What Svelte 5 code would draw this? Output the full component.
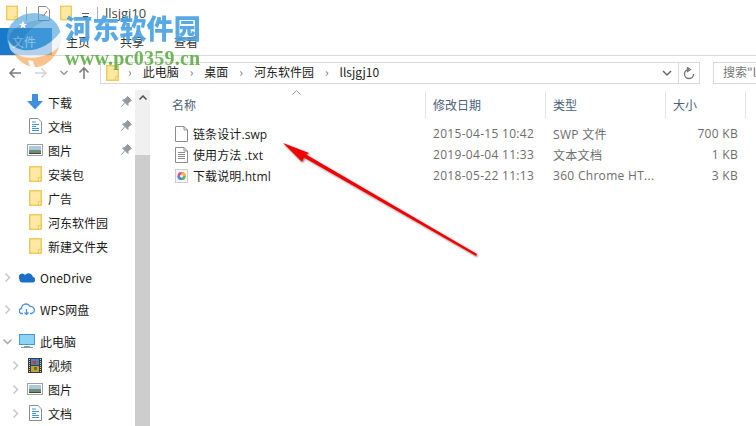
<script>
  const quick = [
    { name: '下载', icon: 'down', pin: true },
    { name: '文档', icon: 'doc', pin: true },
    { name: '图片', icon: 'pic', pin: true },
    { name: '安装包', icon: 'folder' },
    { name: '广告', icon: 'folder' },
    { name: '河东软件园', icon: 'folder' },
    { name: '新建文件夹', icon: 'folder' }
  ];
  const pc = [
    { name: '视频', icon: 'film' },
    { name: '图片', icon: 'pic' },
    { name: '文档', icon: 'doc' }
  ];
  const files = [
    { name: '链条设计.swp', date: '2015-04-15 10:42', type: 'SWP 文件', size: '700 KB', icon: 'blank' },
    { name: '使用方法 .txt', date: '2019-04-04 11:33', type: '文本文档', size: '1 KB', icon: 'txt' },
    { name: '下载说明.html', date: '2018-05-22 11:13', type: '360 Chrome HT...', size: '3 KB', icon: 'html' }
  ];
</script>

{#snippet folder(w, h)}
  <svg width={w} height={h} viewBox="0 0 13 16" class="ic">
    <rect x="0.75" y="0.75" width="11.5" height="14.5" fill="#fde9a4" stroke="#eecb5c" stroke-width="1.5" />
    <path d="M9.5 15V11.5H12.5" fill="none" stroke="#eecb5c" />
  </svg>
{/snippet}

{#snippet navIcon(kind)}
  {#if kind === 'down'}
    <svg width="16" height="16" viewBox="0 0 16 16" class="ic"><path d="M5 0H11V7H16L8 15.5L0 7H5Z" fill="#3f8fe0" /></svg>
  {:else if kind === 'doc'}
    <svg width="13" height="16" viewBox="0 0 13 16" class="ic">
      <path d="M.5.5H9L12.5 4V15.5H.5Z" fill="#fff" stroke="#8d8d8d" />
      <path d="M3 4H7M3 6.500H10M3 8.500H7M3 10.500H10M3 12.500H10" stroke="#3f9ad8" />
    </svg>
  {:else if kind === 'pic'}
    <svg width="16" height="12" viewBox="0 0 16 12" class="ic">
      <rect x=".5" y=".5" width="15" height="11" fill="#fff" stroke="#a0a0a0" />
      <rect x="2" y="2" width="12" height="4" fill="#a9c9dc" />
      <rect x="2" y="6" width="12" height="2.500" fill="#6f8f70" />
      <rect x="2" y="8.500" width="12" height="1.500" fill="#3d4a44" />
    </svg>
  {:else if kind === 'film'}
    <svg width="14" height="15" viewBox="0 0 14 15" class="ic">
      <rect width="14" height="15" fill="#3a3a3a" />
      <rect x="3" y="1" width="8" height="6" fill="#4a7fc0" />
      <rect x="3" y="8" width="8" height="6" fill="#c9a132" />
      <rect x="5" y="3" width="3" height="3" fill="#c33" />
      <rect x="6" y="9" width="3" height="3" fill="#3a8a3a" />
      <path d="M1.500 1V14M12.500 1V14" stroke="#ccc" stroke-dasharray="1 1" />
    </svg>
  {:else}
    {@render folder(13, 16)}
  {/if}
{/snippet}

{#snippet chevron(open)}
  <svg width="9" height="9" viewBox="0 0 9 9" class="chev">
    {#if open}<path d="M.5 2.500L4.500 6.500L8.500 2.500" fill="none" stroke="#a6a6a6" stroke-width="1.500" />
    {:else}<path d="M2.500 .5L6.500 4.500L2.500 8.500" fill="none" stroke="#c8c8c8" stroke-width="1.500" />{/if}
  </svg>
{/snippet}

<div class="win">
  <header class="title">
    {@render folder(12, 16)}
    <span class="sep one"></span>
    <svg width="12" height="15" viewBox="0 0 12 15" class="ic doc"><path d="M.5.5H8L11.500 4V14.500H.5Z" fill="#fff" stroke="#8a8a8a" /><path d="M3.500 8L5.500 10L9 5" fill="none" stroke="#e2573a" /></svg>
    {@render folder(12, 16)}
    <svg width="7" height="7" viewBox="0 0 7 7" class="drop"><path d="M0 .5H7M1 3.500H6L3.500 6.500Z" stroke="#333" stroke-width=".8" fill="#333" /></svg>
    <span class="sep two"></span>
    <span class="wintitle">llsjgj10</span>
  </header>

  <nav class="tabs">
    <div class="file">文件</div>
    <span>主页</span><span>共享</span><span>查看</span>
  </nav>

  <div class="addr">
    <svg width="14" height="12" viewBox="0 0 14 12" class="ar"><path d="M13 6H2M6.500 1.500L2 6L6.500 10.500" fill="none" stroke="#7d7d7d" stroke-width="1.600" /></svg>
    <svg width="14" height="12" viewBox="0 0 14 12" class="ar"><path d="M1 6H12M7.500 1.500L12 6L7.500 10.500" fill="none" stroke="#d4d4d4" stroke-width="1.600" /></svg>
    <svg width="8" height="6" viewBox="0 0 8 6" class="ar"><path d="M.5 1L4 4.500L7.500 1" fill="none" stroke="#8a8a8a" stroke-width="1.200" /></svg>
    <svg width="12" height="14" viewBox="0 0 12 14" class="ar up"><path d="M6 13V2M1.500 6.500L6 2L10.500 6.500" fill="none" stroke="#7d7d7d" stroke-width="1.600" /></svg>
    <div class="path">
      <span class="pf">{@render folder(13, 16)}</span>
      <i>›</i><span class="seg">此电脑</span><i>›</i><span class="seg">桌面</span><i>›</i><span class="seg">河东软件园</span><i>›</i><span class="seg">llsjgj10</span>
      <svg width="10" height="7" viewBox="0 0 10 7" class="pathdrop"><path d="M1 1L5 5L9 1" fill="none" stroke="#666" stroke-width="1.500" /></svg>
      <div class="refresh">
        <svg width="12" height="13" viewBox="0 0 12 13"><path d="M6 2.500A4.500 4.500 0 1 0 10.500 7M4.500 .5V4.500L7.500 2.500Z" fill="none" stroke="#777" stroke-width="1.300" /></svg>
      </div>
    </div>
    <div class="search">搜索"l</div>
  </div>

  <main class="body">
    <aside class="side">
      <div class="navlist">
        {#each quick as it}
          <div class="nav l2">
            <span class="icbox">{@render navIcon(it.icon)}</span>
            <span class="lbl">{it.name}</span>
            {#if it.pin}
              <svg width="11" height="11" viewBox="0 0 11 11" class="pin"><path d="M6.500 .5L10.500 4.500L9 5L7 7.500V9.500L1.500 4L3.500 3.500L6 1.500ZM3.500 7L.5 10.500" fill="#8f98a3" stroke="#8f98a3" /></svg>
            {/if}
          </div>
        {/each}
        <div class="nav l1 g1">
          {@render chevron(false)}
          <svg width="16" height="11" viewBox="0 0 16 11" class="ic"><path d="M3.500 10.500H13A2.800 2.800 0 0 0 14 5A4.500 4.500 0 0 0 6 3A3.500 3.500 0 0 0 .5 7.500A3 3 0 0 0 3.500 10.500Z" fill="#1a70c8" /></svg>
          <span class="lbl">OneDrive</span>
        </div>
        <div class="nav l1 g2">
          {@render chevron(false)}
          <svg width="16" height="12" viewBox="0 0 16 12" class="ic"><path d="M4 10.500H3A2.500 2.500 0 0 1 2.500 5.500A4.500 4.500 0 0 1 11 3.500A3.500 3.500 0 0 1 12.500 10.500H11M7.500 6V11.500M5.500 9.500L7.500 11.500L9.500 9.500" fill="none" stroke="#4a90e8" stroke-width="1.300" /></svg>
          <span class="lbl">WPS网盘</span>
        </div>
        <div class="nav l1 g3">
          {@render chevron(true)}
          <svg width="16" height="14" viewBox="0 0 16 14" class="ic"><rect x=".5" y=".5" width="15" height="10" fill="#8fd3f4" stroke="#3f9ad8" /><path d="M5 12.500H11M2 13.500H14" stroke="#8a9aa6" /></svg>
          <span class="lbl">此电脑</span>
        </div>
        {#each pc as it}
          <div class="nav l3">
            {@render chevron(false)}
            <span class="icbox">{@render navIcon(it.icon)}</span>
            <span class="lbl">{it.name}</span>
          </div>
        {/each}
      </div>
      <div class="scroll">
        <div class="sbtn"><svg width="8" height="5" viewBox="0 0 8 5"><path d="M.5 4.500L4 1L7.500 4.500" fill="none" stroke="#505050" stroke-width="1.500" /></svg></div>
        <div class="thumb"></div>
      </div>
    </aside>

    <section class="list">
      <svg width="9" height="5" viewBox="0 0 9 5" class="sort"><path d="M.5 4.500L4.500 .5L8.500 4.500" fill="none" stroke="#9a9a9a" /></svg>
      <div class="head">
        <div class="c1 th">名称</div>
        <div class="c2 th">修改日期</div>
        <div class="c3 th">类型</div>
        <div class="c4 th">大小</div>
      </div>
      {#each files as f}
        <div class="row">
          <div class="c1 nm">
            {#if f.icon === 'html'}
              <svg width="13" height="14" viewBox="0 0 13 14" class="ic"><rect x=".5" y=".5" width="12" height="13" fill="#f5f5f5" stroke="#cfcfcf" /><circle cx="6.500" cy="7" r="4" fill="#e64a8a" /><path d="M6.500 7V3A4 4 0 0 1 10.500 7Z" fill="#f6b73c" /><path d="M6.500 7H10.500A4 4 0 0 1 6.500 11Z" fill="#4cc36a" /><path d="M6.500 7V11A4 4 0 0 1 2.500 7Z" fill="#4a86e8" /><circle cx="6.500" cy="7" r="1.500" fill="#fff" /></svg>
            {:else}
              <svg width="13" height="16" viewBox="0 0 13 16" class="ic"><path d="M.5.5H9L12.500 4V15.500H.5Z" fill="#fff" stroke="#8d8d8d" /><path d="M9 .5V4H12.500" fill="none" stroke="#8d8d8d" />{#if f.icon === 'txt'}<path d="M3 5.500H10M3 7.500H10M3 9.500H10M3 11.500H10" stroke="#8d8d8d" />{/if}</svg>
            {/if}
            <span class="fname">{f.name}</span>
          </div>
          <div class="c2">{f.date}</div>
          <div class="c3">{f.type}</div>
          <div class="c4 sz">{f.size}</div>
        </div>
      {/each}
    </section>
  </main>

  <svg class="arrow" width="220" height="125" viewBox="0 0 220 125">
    <defs><filter id="sh" x="-10%" y="-20%" width="120%" height="140%"><feDropShadow dx="1" dy="1" stdDeviation="1.200" flood-color="#000" flood-opacity=".55" /></filter></defs>
    <path d="M1 2L27 12L24 13.500L195 113L194 115L22 16.500L20 21Z" fill="#f00000" filter="url(#sh)" />
  </svg>

  <div class="logo">
    <svg width="58" height="54" viewBox="0 0 58 54">
      <ellipse cx="28" cy="24" rx="27" ry="24" fill="#4fa5db" fill-opacity=".92" />
      <path d="M3 26C4 14 22 6 42 7C28 11 17 20 15 35C9 35 5 31 3 26Z" fill="#2c7fc0" fill-opacity=".55" />
      <path d="M17 8L18.200 10.800L21 11L18.800 12.800L19.500 15.500L17 14L14.500 15.500L15.200 12.800L13 11L15.800 10.800Z" fill="#fff" />
      <path d="M2 27C10 42 38 42 55 18C56 24 55 30 53 34C40 50 14 50 4 36Z" fill="#eef2f6" />
      <path d="M8 40C20 48 40 46 53 34C50 44 40 54 30 54C20 54 12 48 8 40Z" fill="#f7ab62" />
      <path d="M22 47L24 54H29L27 48Z" fill="#fff" fill-opacity=".9" />
    </svg>
  </div>
  <div class="mark">河东软件园</div>
  <div class="url">www.pc0359.cn</div>
</div>

<style>
  :global(body) { margin: 0; background: #fff; }
  .win { position: relative; width: 756px; height: 426px; overflow: hidden; background: #fff; font-family: "Noto Sans CJK SC", "Noto Sans", sans-serif; font-size: 12px; color: #1a1a1a; }
  .ic, .chev, .ar, .pin { flex: none; display: block; }

  .title { height: 28px; padding: 5px 0 0 6px; box-sizing: border-box; display: flex; align-items: flex-start; }
  .sep { width: 1px; height: 14px; background: #b0b0b0; flex: none; }
  .sep.one { margin: 2px 11px 0 8px; }
  .sep.two { margin: 2px 7px 0 8px; height: 12px; }
  .doc { margin: 1px 10px 0 0; }
  .drop { margin: 8px 0 0 10px; }
  .wintitle { font-family: "Open Sans", sans-serif; font-size: 13px; line-height: 17px; color: #444; }

  .tabs { height: 27px; display: flex; align-items: center; gap: 30px; border-bottom: 1px solid #dadada; font-size: 12px; color: #333; }
  .file { position: relative; z-index: 2; width: 52px; height: 100%; margin-right: -16px; padding-left: 12px; box-sizing: border-box; display: flex; align-items: center; background: #1979ca; color: #fff; }

  .addr { height: 34px; display: flex; align-items: center; padding-left: 8px; box-sizing: border-box; }
  .ar { margin-right: 12px; }
  .ar.up { margin-left: -2px; margin-right: 8px; }
  .path { flex: none; width: 600px; height: 22px; margin-left: 2px; border: 1px solid #d9d9d9; box-sizing: border-box; display: flex; align-items: center; padding-left: 5px; gap: 11px; font-size: 12px; color: #222; }
  .pf { margin-right: -2px; }
  .seg { margin-bottom: 3px; }
  .path i { font-style: normal; color: #777; font-size: 12px; line-height: 1; margin-bottom: 3px; }
  .pathdrop { margin-left: auto; margin-right: -5px; }
  .refresh { width: 20px; height: 100%; border-left: 1px solid #d9d9d9; display: flex; align-items: center; justify-content: center; }
  .search { margin-left: 13px; flex: 1; height: 22px; border: 1px solid #d9d9d9; border-right: 0; box-sizing: border-box; padding-left: 9px; line-height: 18px; color: #777; white-space: nowrap; overflow: hidden; }

  .body { display: flex; height: 337px; }
  .side { width: 151px; flex: none; display: flex; }
  .navlist { width: 135px; flex: none; }
  .nav { height: 24px; display: flex; align-items: center; position: relative; }
  .nav .lbl { white-space: nowrap; color: #1a1a1a; }
  .l2 { padding-left: 27px; }
  .icbox { width: 16px; display: flex; justify-content: center; margin-right: 5px; flex: none; }
  .pin { position: absolute; left: 121px; top: 6px; }
  .l1 { padding-left: 3px; }
  .l1 .chev { margin-right: 7px; }
  .l1 .ic { margin-right: 5px; }
  .l3 { padding-left: 11px; }
  .l3 .chev { margin-right: 7px; }
  .g1 { margin-top: 7px; height: 25px; }
  .g2 { margin-top: 7px; }
  .g3 { margin-top: 8px; }
  .scroll { width: 15px; flex: none; background: #f0f0f0; }
  .sbtn { height: 65px; padding-top: 5px; box-sizing: border-box; display: flex; align-items: flex-start; justify-content: center; }
  .thumb { height: 272px; background: #cdcdcd; }

  .list { position: relative; flex: 1; padding-left: 14px; color: #6d6d6d; }
  .sort { position: absolute; left: 141px; top: 0; }
  .head { display: flex; height: 27px; margin-top: 1px; margin-bottom: 5px; }
  .th { border-right: 1px solid #e5e5e5; display: flex; align-items: center; box-sizing: border-box; color: #4c607a; }
  .c1 { width: 261px; padding-left: 7px; box-sizing: border-box; flex: none; }
  .c2 { width: 120px; padding-left: 7px; box-sizing: border-box; flex: none; }
  .c3 { width: 120px; padding-left: 7px; box-sizing: border-box; flex: none; white-space: nowrap; }
  .c4 { width: 80px; padding-left: 7px; box-sizing: border-box; flex: none; }
  .row { display: flex; height: 21px; align-items: center; font-size: 12px; font-family: "Open Sans", "Noto Sans CJK SC", sans-serif; letter-spacing: .3px; }
  .row .nm { display: flex; align-items: center; gap: 5px; color: #1a1a1a; padding-left: 10px; letter-spacing: .1px; }
  .sz { text-align: right; padding-right: 8px; }

  .arrow { position: absolute; left: 282px; top: 141px; pointer-events: none; }
  .logo { position: absolute; z-index: 3; left: 6px; top: 13px; opacity: .72; }
  .mark { position: absolute; z-index: 4; left: 65px; top: 10px; font-size: 27px; font-weight: 900; line-height: 36px; letter-spacing: .2px; color: #4ba3e2; opacity: .92; white-space: nowrap; }
  .url { position: absolute; z-index: 4; left: 65px; top: 46px; font-family: "Liberation Serif", serif; font-weight: 700; font-size: 20px; line-height: 24px; color: #63b04a; opacity: .92; white-space: nowrap; letter-spacing: .25px; }
</style>
